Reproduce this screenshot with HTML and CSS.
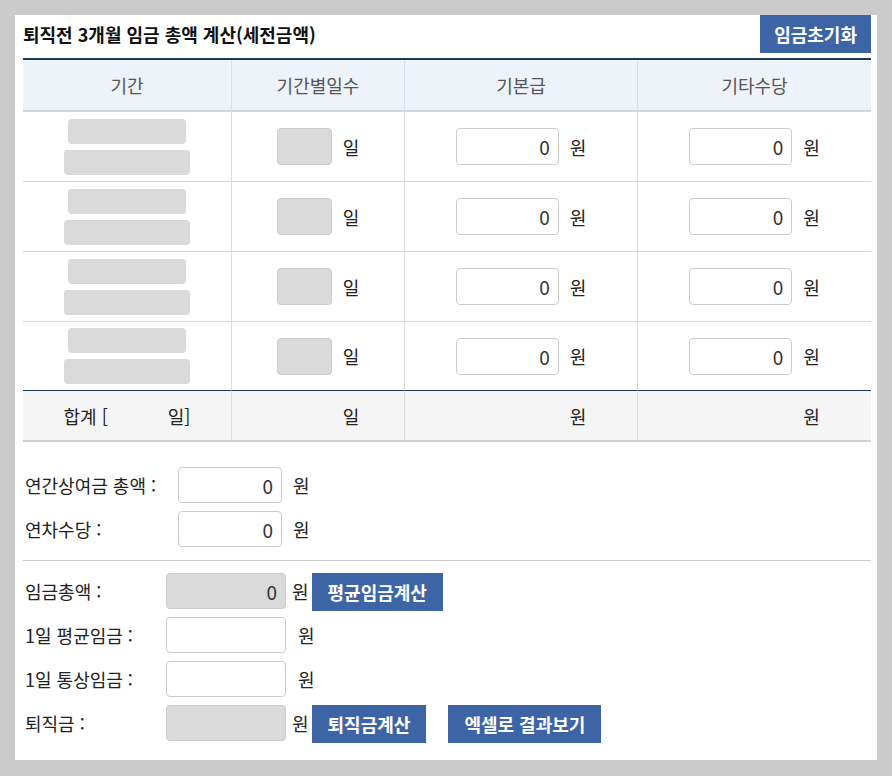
FILE: index.html
```html
<!DOCTYPE html>
<html lang="ko">
<head>
<meta charset="utf-8">
<title>퇴직금 계산</title>
<link rel="stylesheet" href="styles.css">
</head>
<body>
<div class="panel">
  <div class="head">
    <h1 class="title">퇴직전 3개월 임금 총액 계산(세전금액)</h1>
    <button class="btn">임금초기화</button>
  </div>

  <div class="grid">
    <div class="th">기간</div>
    <div class="th">기간별일수</div>
    <div class="th">기본급</div>
    <div class="th last">기타수당</div>

    <div class="td"><div class="period"><span class="pbox a"></span><span class="pbox b"></span></div></div>
    <div class="td"><span class="inp day"></span><span class="unit">일</span></div>
    <div class="td"><span class="inp money">0</span><span class="unit">원</span></div>
    <div class="td last"><span class="inp money">0</span><span class="unit">원</span></div>

    <div class="td"><div class="period"><span class="pbox a"></span><span class="pbox b"></span></div></div>
    <div class="td"><span class="inp day"></span><span class="unit">일</span></div>
    <div class="td"><span class="inp money">0</span><span class="unit">원</span></div>
    <div class="td last"><span class="inp money">0</span><span class="unit">원</span></div>

    <div class="td"><div class="period"><span class="pbox a"></span><span class="pbox b"></span></div></div>
    <div class="td"><span class="inp day"></span><span class="unit">일</span></div>
    <div class="td"><span class="inp money">0</span><span class="unit">원</span></div>
    <div class="td last"><span class="inp money">0</span><span class="unit">원</span></div>

    <div class="td end"><div class="period"><span class="pbox a"></span><span class="pbox b"></span></div></div>
    <div class="td end"><span class="inp day"></span><span class="unit">일</span></div>
    <div class="td end"><span class="inp money">0</span><span class="unit">원</span></div>
    <div class="td end last"><span class="inp money">0</span><span class="unit">원</span></div>

    <div class="sum">합계 [<span class="sp1"></span>일]</div>
    <div class="sum"><span class="sp day"></span><span class="unit">일</span></div>
    <div class="sum"><span class="sp money"></span><span class="unit">원</span></div>
    <div class="sum last"><span class="sp money"></span><span class="unit">원</span></div>
  </div>

  <div class="sec1">
    <div class="row"><span class="lbl w1">연간상여금 총액 :</span><span class="inp money2">0</span><span class="unit">원</span></div>
    <div class="row"><span class="lbl w1">연차수당 :</span><span class="inp money2">0</span><span class="unit">원</span></div>
  </div>

  <hr class="sep">

  <div class="sec2">
    <div class="row"><span class="lbl w2">임금총액 :</span><span class="inp big gray">0</span><span class="unit near">원</span><button class="btn">평균임금계산</button></div>
    <div class="row"><span class="lbl w2">1일 평균임금 :</span><span class="inp big"></span><span class="unit far">원</span></div>
    <div class="row"><span class="lbl w2">1일 통상임금 :</span><span class="inp big"></span><span class="unit far">원</span></div>
    <div class="row"><span class="lbl w2">퇴직금 :</span><span class="inp big gray"></span><span class="unit near">원</span><button class="btn">퇴직금계산</button><button class="btn excel">엑셀로 결과보기</button></div>
  </div>
</div>
</body>
</html>
```

FILE: styles.css
```css
* { box-sizing: border-box; }
body {
  margin: 0;
  background: #cbcbcb;
  font-family: "Noto Sans CJK KR", "Noto Sans", sans-serif;
  font-size: 18px;
  color: #222;
}
.panel {
  margin: 15px 0 0 15px;
  width: 862px;
  height: 745px;
  background: #fff;
  padding: 0 6px 0 8px;
}
.head {
  display: flex;
  align-items: center;
  justify-content: space-between;
  height: 38px;
  margin-bottom: 5px;
}
.title {
  margin: 0;
  font-size: 18px;
  font-weight: 700;
  color: #111;
  line-height: 1;
}
.btn {
  border: 0;
  background: #3d65a6;
  color: #fff;
  font-family: inherit;
  font-size: 18px;
  font-weight: 700;
  height: 38px;
  padding: 0 14px;
  line-height: 1;
  cursor: pointer;
}
.grid {
  display: grid;
  grid-template-columns: 209px 173px 233px 233px;
  border-top: 2px solid #1b3b5c;
}
.th {
  height: 52px;
  background: #eef3fa;
  border-bottom: 2px solid #d4d7de;
  border-right: 1px solid #d9dee7;
  color: #555;
  display: flex;
  align-items: center;
  justify-content: center;
  line-height: 1;
}
.td {
  height: 70px;
  border-bottom: 1px solid #d6d6d6;
  border-right: 1px solid #dcdcdc;
  display: flex;
  align-items: center;
  justify-content: center;
}
.td.end { border-bottom: 0; height: 68px; }
.last { border-right: 0 !important; }
.period {
  display: flex;
  flex-direction: column;
  align-items: center;
  gap: 6px;
}
.pbox {
  display: block;
  height: 25px;
  background: #dadada;
  border-radius: 4px;
}
.pbox.a { width: 118px; }
.pbox.b { width: 126px; }
.inp {
  display: inline-flex;
  align-items: center;
  justify-content: flex-end;
  height: 37px;
  border: 1px solid #cccccc;
  border-radius: 4px;
  background: #fff;
  padding-right: 8px;
  font-size: 19px;
  color: #333;
  line-height: 1;
}
.inp.day { width: 55px; background: #dadada; }
.inp.money { width: 103px; }
.inp.money2 { width: 104px; height: 36px; }
.inp.big { width: 120px; height: 36px; }
.inp.gray { background: #dadada; }
.unit {
  margin-left: 11px;
  line-height: 1;
  color: #222;
}
.sum {
  height: 52px;
  background: #f5f5f5;
  border-top: 1px solid #1b3b5c;
  border-bottom: 2px solid #cfcfcf;
  border-right: 1px solid #dcdcdc;
  display: flex;
  align-items: center;
  justify-content: center;
  line-height: 1;
}
.sp1 { display: inline-block; width: 60px; }
.sp { display: inline-block; }
.sp.day { width: 55px; }
.sp.money { width: 103px; }
.sec1 {
  margin-top: 25px;
  display: flex;
  flex-direction: column;
  gap: 8px;
}
.row {
  display: flex;
  align-items: center;
  height: 36px;
}
.lbl {
  padding-left: 2px;
  line-height: 1;
  color: #222;
}
.w1 { width: 155px; }
.w2 { width: 143px; }
.sep {
  margin: 13px 0 12px;
  border: 0;
  border-top: 1px solid #cccccc;
  height: 0;
}
.sec2 {
  display: flex;
  flex-direction: column;
  gap: 8px;
}
.sec2 .row { align-items: flex-start; }
.sec2 .lbl, .sec2 .unit { align-self: center; }
.unit.near { margin-left: 6px; }
.unit.far { margin-left: 12px; }
.sec2 .btn { margin-left: 3px; padding: 0 16px; }
.sec2 .btn.excel { margin-left: 22px; }
```
